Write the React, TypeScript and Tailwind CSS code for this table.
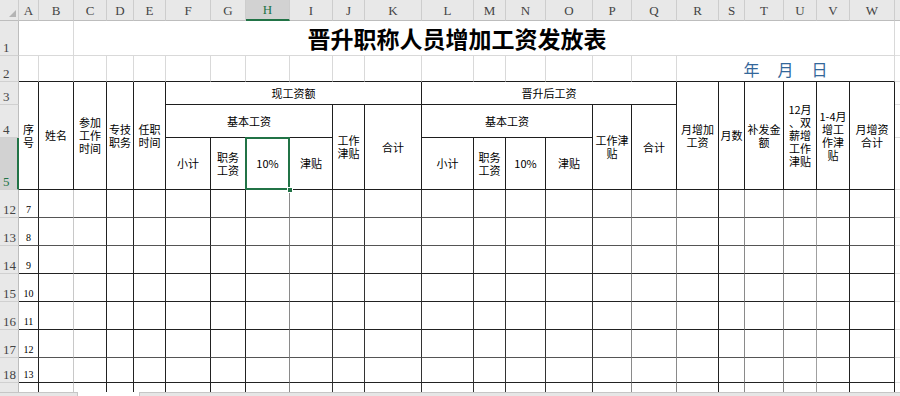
import React from "react";

const COLS = "ABCDEFGHIJKLMNOPQRSTUVW".split("");

const T =
  "border-r border-b border-[#1e1e1e] flex items-center justify-center text-center text-[11px] leading-[13px] text-black";

const dataV = [
  "border-r-[#222]",
  "border-r-[#c8c8c8]",
  "border-r-[#222]",
  "border-r-[#222]",
  "border-r-[#222]",
  "border-r-[#222]",
  "border-r-[#222]",
  "border-r-[#8a8a8a]",
  "border-r-[#333]",
  "border-r-[#333]",
  "border-r-[#333]",
  "border-r-[#333]",
  "border-r-[#333]",
  "border-r-[#333]",
  "border-r-[#333]",
  "border-r-[#8a8a8a]",
  "border-r-[#8a8a8a]",
  "border-r-[#222]",
  "border-r-[#8a8a8a]",
  "border-r-[#8a8a8a]",
  "border-r-[#a0a0a0]",
  "border-r-[#222]",
  "border-r-[#222]",
];

const dataH = [
  "border-b-[#555]",
  "border-b-[#555]",
  "border-b-[#222]",
  "border-b-[#222]",
  "border-b-[#222]",
  "border-b-[#555]",
  "border-b-[#222]",
];

function RowHead({ label, selected }: { label?: string; selected?: boolean }) {
  return (
    <div
      className={
        "flex items-end pl-[3px] pb-[1px] text-[13px] leading-none border-b border-b-[#d0d0d0] font-['Liberation_Serif',serif] " +
        (selected
          ? "bg-[#d2d2d2] text-[#217346] border-r-2 border-r-[#217346]"
          : "bg-[#e8e8e8] text-[#444] border-r border-r-[#bdbdbd]")
      }
    >
      {label}
    </div>
  );
}

function XCell() {
  return <div className="border-b border-b-[#e0e0e0]" />;
}

export default function App() {
  const dataRows = [12, 13, 14, 15, 16, 17, 18];
  return (
    <div className="w-[900px] h-[396px] overflow-hidden bg-white flex flex-col font-['Noto_Sans_CJK_SC',sans-serif]">
      <div className="grid grid-cols-[19px_20px_35px_33px_27px_32px_45px_35px_44px_43px_32px_57px_52px_32px_40px_47px_39px_45px_42px_26px_39px_33px_33px_45px_1fr] grid-rows-[21px_35px_26px_23px_33px_52px_28px_28px_28px_28px_28px_28px_25px_9px]">
        {/* column header row */}
        <div className="bg-[#e8e8e8] border-r border-b border-r-[#cdcdcd] border-b-[#bdbdbd] flex items-end justify-end pr-[2px] pb-[3px]">
          <svg width="7" height="7" viewBox="0 0 7 7">
            <polygon points="7,0 7,7 0,7" fill="#b4b4b4" />
          </svg>
        </div>
        {COLS.map((c) =>
          c === "H" ? (
            <div
              key={c}
              className="bg-[#d2d2d2] text-[#217346] flex items-center justify-center text-[13px] leading-none border-r border-b-2 border-r-[#cdcdcd] border-b-[#217346] font-['Liberation_Serif',serif]"
            >
              {c}
            </div>
          ) : (
            <div
              key={c}
              className="bg-[#e8e8e8] text-[#444] flex items-center justify-center text-[13px] leading-none border-r border-b border-r-[#cdcdcd] border-b-[#bdbdbd] font-['Liberation_Serif',serif]"
            >
              {c}
            </div>
          )
        )}
        <div className="bg-[#e8e8e8] border-b border-b-[#bdbdbd]" />

        {/* row 1 */}
        <RowHead label="1" />
        <div className="col-span-2 border-r border-b border-[#d9d9d9]" />
        <div className="col-span-21 border-r border-b border-[#d9d9d9] flex items-center justify-center pr-[54px] text-[23px] font-bold leading-none text-black">
          晋升职称人员增加工资发放表
        </div>
        <XCell />

        {/* row 2 */}
        <RowHead label="2" />
        {COLS.slice(0, 17).map((c) => (
          <div key={c} className="border-r border-b border-r-[#d9d9d9] border-b-[#1e1e1e]" />
        ))}
        <div className="col-span-6 border-r border-b border-r-[#d9d9d9] border-b-[#1e1e1e] flex items-center justify-center gap-[18px] text-[16px] leading-none text-[#33679a]">
          <span>年</span>
          <span>月</span>
          <span>日</span>
        </div>
        <XCell />

        {/* row 3 */}
        <RowHead label="3" />
        <div className={T + " row-span-3"}>
          序<br />号
        </div>
        <div className={T + " row-span-3"}>姓名</div>
        <div className={T + " row-span-3"}>
          参加
          <br />
          工作
          <br />
          时间
        </div>
        <div className={T + " row-span-3"}>
          专技
          <br />
          职务
        </div>
        <div className={T + " row-span-3"}>
          任职
          <br />
          时间
        </div>
        <div className={T + " col-span-6"}>现工资额</div>
        <div className={T + " col-span-6"}>晋升后工资</div>
        <div className={T + " row-span-3"}>
          月增加
          <br />
          工资
        </div>
        <div className={T + " row-span-3"}>月数</div>
        <div className={T + " row-span-3"}>
          补发金
          <br />
          额
        </div>
        <div className={T + " row-span-3"}>
          12月
          <br />
          、双
          <br />
          薪增
          <br />
          工作
          <br />
          津贴
        </div>
        <div className={T + " row-span-3"}>
          1-4月
          <br />
          增工
          <br />
          作津
          <br />
          贴
        </div>
        <div className={T + " row-span-3"}>
          月增资
          <br />
          合计
        </div>
        <XCell />

        {/* row 4 */}
        <RowHead label="4" />
        <div className={T + " col-span-4"}>基本工资</div>
        <div className={T + " row-span-2"}>
          工作
          <br />
          津贴
        </div>
        <div className={T + " row-span-2"}>合计</div>
        <div className={T + " col-span-4"}>基本工资</div>
        <div className={T + " row-span-2"}>
          工作津
          <br />
          贴
        </div>
        <div className={T + " row-span-2"}>合计</div>
        <XCell />

        {/* row 5 */}
        <RowHead label="5" selected />
        <div className={T}>小计</div>
        <div className={T}>
          职务
          <br />
          工资
        </div>
        <div className={T + " relative"}>
          10%
          <div className="absolute -left-[1px] -top-[1px] -right-[1px] -bottom-[1px] border-2 border-[#217346] z-10" />
          <div className="absolute -right-[4px] -bottom-[4px] w-[6px] h-[6px] bg-[#217346] border border-white z-20" />
        </div>
        <div className={T}>津贴</div>
        <div className={T}>小计</div>
        <div className={T}>
          职务
          <br />
          工资
        </div>
        <div className={T}>10%</div>
        <div className={T}>津贴</div>
        <XCell />

        {/* data rows */}
        {dataRows.map((r, ri) => (
          <React.Fragment key={r}>
            <RowHead label={String(r)} />
            {COLS.map((c, ci) => (
              <div
                key={c}
                className={
                  "border-r border-b " +
                  dataV[ci] +
                  " " +
                  dataH[ri] +
                  (ci === 0
                    ? " flex items-end justify-center pb-[2px] text-[10px] leading-none font-['Liberation_Serif',serif] text-black"
                    : "")
                }
              >
                {ci === 0 ? String(ri + 7) : null}
              </div>
            ))}
            <XCell />
          </React.Fragment>
        ))}

        {/* partial row */}
        <div className="bg-[#e8e8e8] border-r border-r-[#bdbdbd]" />
        {COLS.map((c, ci) => (
          <div key={c} className={"border-r " + dataV[ci]} />
        ))}
        <div />
      </div>

      {/* sheet tab strip (cut off) */}
      <div className="flex h-[4px]">
        <div className="w-[78px] bg-[#e6e6e6] border-t border-r border-[#c6c6c6]" />
        <div className="w-[61px] bg-white" />
        <div className="flex-1 bg-[#e6e6e6] border-t border-l border-[#c6c6c6]" />
      </div>
    </div>
  );
}
